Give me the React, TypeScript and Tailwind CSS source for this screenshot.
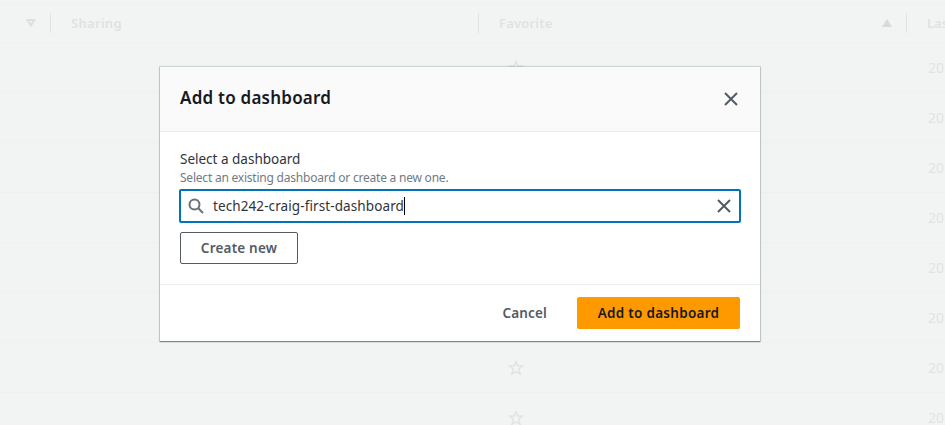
import React from "react";

const ROWS = [0, 1, 2, 3, 4, 5, 6, 7];

function Star() {
  return (
    <svg width="16" height="16" viewBox="0 0 16 16" fill="none" stroke="#e0e3e3" strokeWidth="1.4" strokeLinejoin="miter">
      <path d="M8 1.8 9.8 6h4.5l-3.6 3 1.5 5.2L8 11.9l-4.2 2.3L5.3 9 1.7 6h4.5z" />
    </svg>
  );
}

function Cross() {
  return (
    <svg width="16" height="16" viewBox="0 0 16 16" fill="none" stroke="#545b64" strokeWidth="2">
      <path d="m2 2 12 12M14 2 2 14" />
    </svg>
  );
}

function DashboardTable() {
  return (
    <div className="h-full w-full overflow-hidden pt-[3px]">
      <div className="flex h-10 items-center border-y border-[#eff1f1] text-[13px] font-semibold text-[#dfe2e2]">
        <div className="flex h-5 w-[51px] shrink-0 items-center justify-end border-r border-[#e0e3e3] pr-[14px]">
          <svg width="10" height="8" viewBox="0 0 10 8" fill="none" stroke="#dddfe0" strokeWidth="2">
            <path d="M1.5 1h7L5 6.5z" />
          </svg>
        </div>
        <div className="flex h-5 w-[428px] shrink-0 items-center border-r border-[#e0e3e3] pl-5">
          <span className="relative top-px tracking-[0.3px]">Sharing</span>
        </div>
        <div className="flex h-5 w-[428px] shrink-0 items-center justify-between border-r border-[#e0e3e3] pr-[14px] pl-5">
          <span className="relative top-px tracking-[0.2px]">Favorite</span>
          <svg width="10" height="8" viewBox="0 0 10 8" fill="#d7dada">
            <path d="M5 0l5 8H0z" />
          </svg>
        </div>
        <div className="relative top-px w-[38px] shrink-0 pl-5 whitespace-nowrap">Las</div>
      </div>
      {ROWS.map((row) => (
        <div key={row} className="flex h-[50px] items-center border-b border-[#eff1f1] text-sm text-[#e1e4e4]">
          <div className="w-[479px] shrink-0" />
          <div className="w-[428px] shrink-0 pl-[29px]">
            <Star />
          </div>
          <div className="w-[38px] shrink-0 pl-[21px]">20</div>
        </div>
      ))}
    </div>
  );
}

export default function App() {
  return (
    <div className="relative h-[425px] w-[945px] overflow-hidden bg-[#f2f4f4] font-['Noto_Sans',sans-serif]">
      <DashboardTable />
      <div className="absolute top-[67px] left-[160px] flex h-[274px] w-[600px] flex-col bg-white shadow-[0_1px_1px_0_rgba(0,28,36,0.4),0_0_1px_1px_rgba(0,28,36,0.15)]">
        <div className="flex h-[65px] items-center justify-between border-b border-[#eaeded] bg-[#fafafa] pr-[21px] pl-5">
          <h2 className="-mt-0.5 text-[17px] font-semibold tracking-[0.23px] text-[#16191f]">Add to dashboard</h2>
          <Cross />
        </div>
        <div className="flex h-[152px] flex-col items-start px-5 pt-[17px]">
          <label className="text-[13.5px] leading-[20px] text-[#30333a]">Select a dashboard</label>
          <p className="relative top-px text-[12px] leading-[16px] tracking-[-0.22px] text-[#737a82]">Select an existing dashboard or create a new one.</p>
          <div className="-mx-px mt-1 flex h-[34px] w-[562px] items-center rounded-[2px] border-2 border-[#0073bb] pr-[7px] pl-[7px]">
            <svg width="16" height="16" viewBox="0 0 16 16" fill="none" stroke="#687078" strokeWidth="2">
              <circle cx="6.5" cy="6.5" r="5" />
              <path d="m10 10 5 5" />
            </svg>
            <span className="ml-[9px] text-[13.5px] tracking-[0.1px] text-[#30333a]">tech242-craig-first-dashboard</span>
            <span className="h-[18px] w-px bg-black" />
            <span className="ml-auto">
              <Cross />
            </span>
          </div>
          <button className="mt-[9px] h-8 w-[118px] rounded-[2px] border border-[#545b64] text-[13.5px] font-semibold tracking-[0.2px] text-[#545b64]">Create new</button>
        </div>
        <div className="flex h-[57px] items-center justify-end border-t border-[#eaeded] pr-5 text-[13.5px] font-semibold">
          <button className="mr-[30px] tracking-[0.15px] text-[#545b64]">Cancel</button>
          <button className="h-8 w-[163px] rounded-[2px] bg-[#ff9900] tracking-[0.27px] text-[#16191f]">Add to dashboard</button>
        </div>
      </div>
    </div>
  );
}
